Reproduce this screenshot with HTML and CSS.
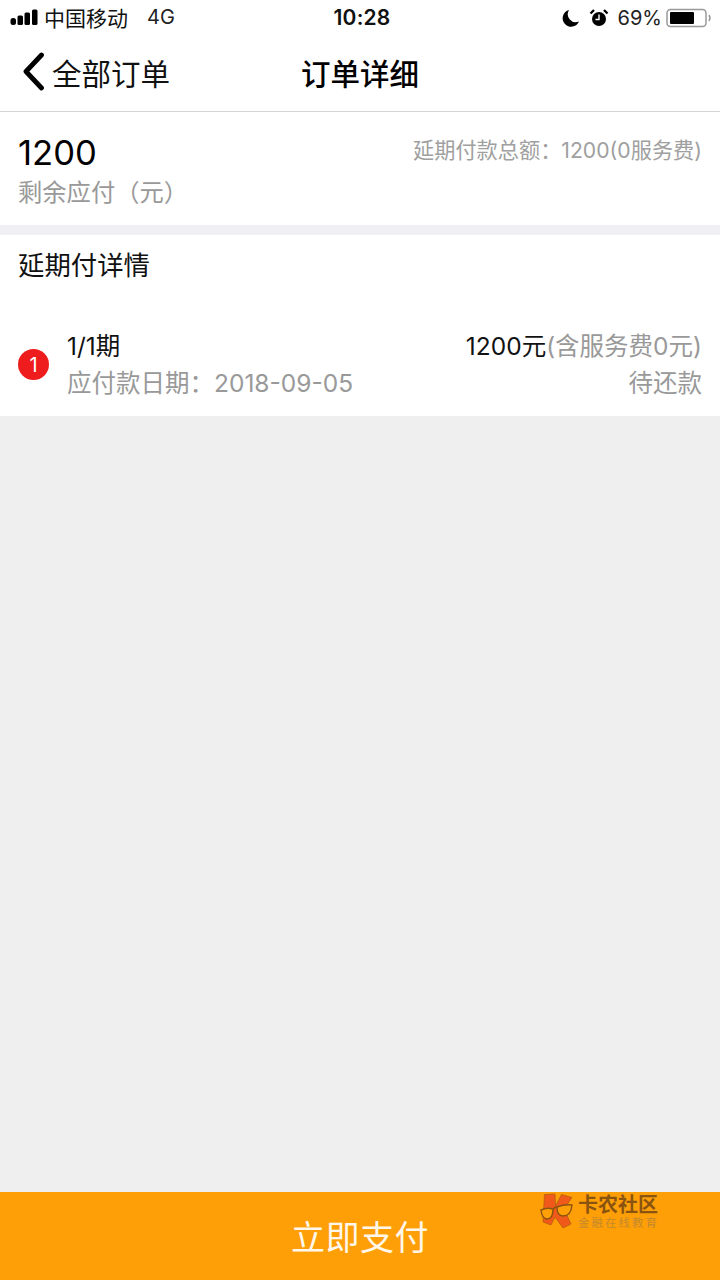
FILE: index.html
```html
<!DOCTYPE html>
<html lang="zh">
<head>
<meta charset="utf-8">
<title>订单详细</title>
<link rel="stylesheet" href="styles.css">
</head>
<body>
<div class="app">
  <header class="top">
    <div class="status">
      <div class="status-left">
        <svg class="signal" width="28" height="17" viewBox="0 0 28 17"><rect x="0.5" y="9" width="5.5" height="7" rx="2.5" fill="#000"/><rect x="7.5" y="6.5" width="5.5" height="9.5" rx="1.5" fill="#000"/><rect x="14.5" y="3.5" width="5.5" height="12.5" rx="1.5" fill="#000"/><rect x="22" y="0.5" width="5.5" height="15.5" rx="1.5" fill="#000"/></svg>
        <span class="carrier">中国移动</span>
        <span class="net">4G</span>
      </div>
      <div class="clock">10:28</div>
      <div class="status-right">
        <svg class="moon" width="18" height="18" viewBox="0 0 18 18"><path d="M7 1A8.5 8.5 0 1 0 17 12.5 A8 8 0 0 1 7 1Z" fill="#000"/></svg>
        <svg class="alarm" width="20" height="20" viewBox="0 0 20 20"><circle cx="10" cy="11" r="7" fill="#000"/><path d="M1.5 5.5 5 2M18.5 5.5 15 2" stroke="#000" stroke-width="2.4" fill="none"/><path d="M10 6.5V11.5H6.5" stroke="#fff" stroke-width="1.4" fill="none"/></svg>
        <span class="pct">69%</span>
        <svg class="battery" width="46" height="20" viewBox="0 0 46 20"><rect x="1" y="1.5" width="39" height="17" rx="3.5" fill="none" stroke="#999" stroke-width="1.5"/><rect x="4" y="4" width="24" height="12" rx="1" fill="#000"/><path d="M43 7q2 3 0 6" fill="none" stroke="#999" stroke-width="1.5"/></svg>
      </div>
    </div>
    <nav class="nav">
      <div class="back">
        <svg width="26" height="40" viewBox="0 0 26 40"><path d="M21.5 3 6 19.5 21.5 36" fill="none" stroke="#000" stroke-width="4.8" stroke-linecap="round" stroke-linejoin="round"/></svg>
        <span>全部订单</span>
      </div>
      <h1 class="title">订单详细</h1>
    </nav>
  </header>

  <section class="summary">
    <div>
      <div class="amount">1200</div>
      <div class="remain">剩余应付（元）</div>
    </div>
    <div class="total">延期付款总额：1200(0服务费)</div>
  </section>

  <section class="detail">
    <h2 class="detail-title">延期付详情</h2>
    <div class="row">
      <span class="badge">1</span>
      <div class="row-main">
        <div class="row-line">
          <span class="period">1/1期</span>
          <span class="money">1200元<span class="fee">(含服务费0元)</span></span>
        </div>
        <div class="row-line sub">
          <span>应付款日期：2018-09-05</span>
          <span>待还款</span>
        </div>
      </div>
    </div>
  </section>

  <div class="spacer"></div>

  <footer class="pay">
    <span class="pay-text">立即支付</span>
    <div class="mark">
      <svg width="36" height="38" viewBox="0 0 36 38"><path d="M4.5 2.5 15 2 15.5 14 21.5 2.5 32 5.5 24 17 31 32 23 36 15 25 11 33 3 30z" fill="#f0591a" stroke="#b5600f" stroke-width="0.8"/><path d="M1 18Q7 15 13 17 13 27 7 27 2 27 1 18Z" fill="#ff9f08" stroke="#8a5410" stroke-width="1.4"/><path d="M17 15Q25 12 32 13 31 24 23 24 17 24 17 15Z" fill="#ff9f08" stroke="#8a5410" stroke-width="1.4"/><path d="M13 17Q15 15 17 15" fill="none" stroke="#8a5410" stroke-width="1.4"/></svg>
      <div class="mark-text">
        <div class="mark-big">卡农社区</div>
        <div class="mark-small">金融在线教育</div>
      </div>
    </div>
  </footer>
</div>
</body>
</html>
```

FILE: styles.css
```css
* { box-sizing: border-box; }
html, body { margin: 0; padding: 0; }
body {
  font-family: "Inter", "Noto Sans CJK SC", sans-serif;
  background: #efefef;
  color: #000;
}
.app { width: 720px; height: 1280px; display: flex; flex-direction: column; overflow: hidden; background: #efefef; }
.top { height: 112px; background: #fff; border-bottom: 1px solid #d4d4d4; }
.status { height: 35px; position: relative; display: flex; justify-content: space-between; align-items: center; padding: 0 8px 0 10px; }
.status-left { display: flex; align-items: center; }
.signal { margin-right: 6px; }
.carrier { font-size: 21px; color: #111; margin-bottom: 2px; }
.net { font-size: 20px; margin-left: 19px; color: #222; margin-bottom: 2px; }
.clock { position: absolute; left: 0; right: 0; padding-left: 4px; text-align: center; font-size: 21px; font-weight: 600; letter-spacing: 0.2px; color: #111; }
.status-right { display: flex; align-items: center; }
.moon { margin-right: 9px; }
.alarm { margin-right: 9px; }
.pct { font-size: 20px; color: #222; margin-right: 4px; }
.nav { height: 73px; position: relative; display: flex; align-items: center; padding-left: 20px; }
.back { display: flex; align-items: center; font-size: 29.5px; color: #111; }
.back span { margin-left: 6px; }
.title { position: absolute; left: 0; right: 0; margin: 0; text-align: center; font-size: 29.5px; font-weight: 500; color: #000; }
.summary { height: 113px; background: #fff; display: flex; justify-content: space-between; padding: 20px 18px 0; }
.amount { font-size: 34.6px; line-height: 40px; color: #000; }
.remain { font-size: 24.3px; line-height: 34px; color: #999; margin-top: 3px; }
.total { font-size: 21.2px; line-height: 36px; color: #a0a0a0; }
.detail { height: 191px; background: #fff; border-top: 10px solid #f0f0f4; }
.detail-title { margin: 0; padding: 12px 18px 0; font-size: 26.4px; line-height: 36px; font-weight: 400; color: #111; }
.row { display: flex; align-items: center; padding: 0 18px; margin-top: 44px; }
.badge { width: 31px; height: 31px; border-radius: 50%; background: #ee1c1c; color: #fff; font-size: 20px; display: flex; align-items: center; justify-content: center; flex: none; }
.row-main { flex: 1; margin-left: 18px; }
.row-line { display: flex; justify-content: space-between; font-size: 24.5px; line-height: 38px; color: #111; }
.sub { color: #999; margin-top: -1px; }
.fee { color: #999; }
.spacer { flex: 1; }
.pay { height: 88px; background: #ff9f08; position: relative; display: flex; align-items: center; justify-content: center; padding-bottom: 2px; }
.pay-text { font-size: 34px; color: #fff8ea; letter-spacing: 0.5px; }
.mark { position: absolute; left: 540px; top: 0; display: flex; align-items: flex-start; }
.mark-text { margin-left: 2px; padding-top: 2px; }
.mark-big { font-size: 20px; line-height: 22px; font-weight: 700; color: #8a5410; }
.mark-small { font-size: 11.5px; line-height: 14px; color: #c4892c; letter-spacing: 2px; }
```
